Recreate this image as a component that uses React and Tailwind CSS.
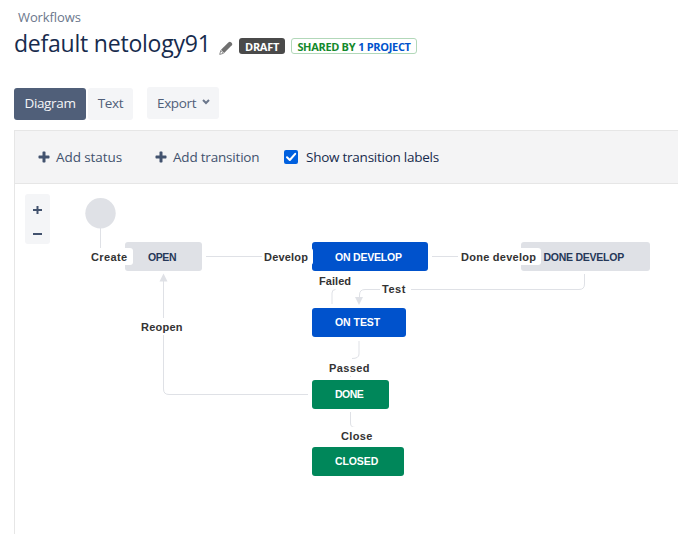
import React from "react";

const nodes = [
  { label: "OPEN", box: "left-[110px] top-[58.3px] w-[77px] pt-px bg-[#dfe1e6] text-[#253858] tracking-[-0.4px]" },
  { label: "ON DEVELOP", box: "left-[297px] top-[58.3px] w-[116px] pt-px bg-[#0052cc] text-white tracking-[-0.2px]" },
  { label: "DONE DEVELOP", box: "left-[505.5px] top-[58.3px] w-[129px] pt-px bg-[#dfe1e6] text-[#253858] tracking-[-0.25px]" },
  { label: "ON TEST", box: "left-[297px] top-[124.3px] w-[94px] bg-[#0052cc] text-white tracking-[-0.05px]" },
  { label: "DONE", box: "left-[297px] top-[196.3px] w-[77px] bg-[#00875a] text-white tracking-[-0.5px]" },
  { label: "CLOSED", box: "left-[297px] top-[263.3px] w-[92px] bg-[#00875a] text-white tracking-[-0.1px]" },
];

const labels = [
  { text: "Create", box: "left-[74px] w-[44px] top-[64px] tracking-[0.4px]" },
  { text: "Develop", box: "left-[247px] w-[51px] top-[64px] tracking-[0.2px]" },
  { text: "Done develop", box: "left-[444px] w-[82px] top-[64px] tracking-[0.25px]" },
  { text: "Failed", box: "left-[302px] w-[39px] top-[88px] tracking-[0.05px]" },
  { text: "Test", box: "left-[365px] w-[31px] top-[96px] tracking-[0.5px]" },
  { text: "Passed", box: "left-[312px] w-[48px] top-[175px] tracking-[0.4px]" },
  { text: "Close", box: "left-[324px] w-[39px] top-[243px] tracking-[0.35px]" },
  { text: "Reopen", box: "left-[124px] w-[49px] top-[134px] tracking-[0.25px]" },
];

function Plus() {
  return (
    <svg width="12" height="12" viewBox="0 0 12 12" className="shrink-0 fill-[#42526e]">
      <path d="M4.5 1.2Q4.5.5 5.2.5H6.8Q7.5.5 7.5 1.2V4.5H10.8Q11.5 4.5 11.5 5.2V6.8Q11.5 7.5 10.8 7.5H7.5V10.8Q7.5 11.5 6.8 11.5H5.2Q4.5 11.5 4.5 10.8V7.5H1.2Q.5 7.5.5 6.8V5.2Q.5 4.5 1.2 4.5H4.5Z" />
    </svg>
  );
}

function Edges() {
  return (
    <svg width="663" height="350" viewBox="15 184 663 350" className="absolute left-0 top-0" fill="none" stroke="#dfe1e6">
      <circle cx="100.5" cy="213.3" r="15.2" fill="#dfe1e6" stroke="none" />
      <path d="M100.5 228V248M206 256.5H262M432 256.5H458" />
      <path d="M163.5 280V389Q163.5 394.5 169 394.5H308" />
      <path d="M163.5 273.5L167.5 281.5H159.5Z" fill="#dfe1e6" stroke="none" />
      <path d="M584.5 274V284Q584.5 289.500 579 289.500H365Q359.5 289.500 359.5 295V298" />
      <path d="M355 297H363L359 305Z" fill="#dfe1e6" stroke="none" />
      <path d="M332 304V293Q332 289.500 335.500 289.500M359 341V354Q359 358.500 352 358.500M350.500 412V423Q350.500 427.500 355 427.500M350.500 375V377" />
    </svg>
  );
}

export default function App() {
  return (
    <div className="flex h-[534px] w-[678px] flex-col overflow-hidden bg-white pl-[14px] font-['Open_Sans','Noto_Sans',sans-serif] text-[#42526e]">
      <header className="flex h-[87px] shrink-0 flex-col whitespace-nowrap">
        <div className="mt-[7px] h-5 pl-1 text-[13px] leading-5 tracking-[-0.1px] text-[#6b778c]">Workflows</div>
        <div className="flex h-8 items-start">
          <h1 className="w-[204px] text-[23px] leading-8 tracking-[-0.22px] text-[#172b4d]">default netology91</h1>
          <svg width="14" height="14" viewBox="0 0 14 14" className="ml-px mt-[14px] shrink-0 fill-[#707070]">
            <path d="M2 8.800L9.600 1.200Q10.800.1 12 1.200L12.800 2Q13.900 3.200 12.800 4.300L5.200 11.900Z" />
            <path d="M1.800 9.500L4.500 12.300L.7 13.400Z" fill="none" stroke="#707070" strokeWidth=".8" />
          </svg>
          <span className="ml-[6px] mt-[11px] flex h-4 w-[46px] items-center justify-center rounded-[3px] bg-[#4a4a4a] pt-[2px] text-[11px] font-bold tracking-[-0.3px] text-white">DRAFT</span>
          <span className="ml-[6px] mt-[11px] flex h-4 w-[126px] items-center justify-center gap-[3px] rounded-[3px] border border-[#b2d8b9] pt-[2px] text-[11px] font-bold tracking-[-0.32px] text-[#14892c]">
            <span>SHARED BY</span>
            <span className="text-[#0052cc]">1 PROJECT</span>
          </span>
        </div>
      </header>
      <div className="flex h-[43px] shrink-0 items-start text-[13.500px] leading-5 tracking-[-0.35px]">
        <button className="mt-px flex h-8 w-[72px] items-center justify-center rounded-[3px] bg-[#505f79] pb-[2px] text-[#f4f5f7]">Diagram</button>
        <button className="ml-[2px] mt-px flex h-8 w-[45px] items-center justify-center rounded-[3px] bg-[#f4f5f7] pb-[2px] text-[#505f79]">Text</button>
        <button className="ml-[14px] flex h-8 w-[72px] items-center rounded-[3px] bg-[#f4f5f7] pl-[10px] text-[#505f79]">
          <span className="w-[45px] text-left">Export</span>
          <svg width="8" height="6" viewBox="0 0 8 6" className="-mt-0.5" fill="none" stroke="#6b778c" strokeWidth="2">
            <path d="M1 1L4 4L7 1" />
          </svg>
        </button>
      </div>
      <main className="flex min-h-0 flex-1 flex-col border-l border-t border-[#e6e6e6]">
        <div className="flex h-[53px] shrink-0 items-center whitespace-nowrap border-b border-[#e6e6e6] bg-[#f4f4f5] pl-[23px] text-[13.500px] leading-5 tracking-[-0.15px]">
          <Plus />
          <span className="ml-[6px] w-[99px] tracking-[-0.08px]">Add status</span>
          <Plus />
          <span className="ml-[6px] w-[111px] tracking-[-0.2px]">Add transition</span>
          <svg width="14" height="14" viewBox="0 0 14 14" className="shrink-0">
            <rect width="14" height="14" rx="2" fill="#0060df" />
            <path d="M3 7.200L5.800 10L11.200 3.800" fill="none" stroke="white" strokeWidth="2" strokeLinecap="round" strokeLinejoin="round" />
          </svg>
          <span className="ml-2 tracking-[-0.25px] text-[#172b4d]">Show transition labels</span>
        </div>
        <div className="relative min-h-0 flex-1 overflow-hidden">
          <Edges />
          {nodes.map((n) => (
            <div key={n.label} className={`absolute flex h-[28.4px] items-center whitespace-nowrap rounded-[3px] pl-[23px] font-['Liberation_Sans',sans-serif] text-[10.5px] font-bold leading-none ${n.box}`}>
              {n.label}
            </div>
          ))}
          {labels.map((l) => (
            <div key={l.text} className={`absolute flex h-[17px] items-center whitespace-nowrap rounded-[3px] bg-white pl-[2px] pt-px font-['Liberation_Sans',sans-serif] text-[11px] font-bold leading-none text-[#333333] ${l.box}`}>
              {l.text}
            </div>
          ))}
          <div className="absolute left-[10px] top-[10px] flex h-[50px] w-[25px] flex-col items-center justify-between rounded-[3px] bg-[#f4f5f7] pb-[9px] pt-[11px]">
            <svg width="9" height="9" viewBox="0 0 9 9" stroke="#42526e" strokeWidth="2"><path d="M0 5H9M4.500 1V9" /></svg>
            <svg width="9" height="2" viewBox="0 0 9 2" stroke="#42526e" strokeWidth="2"><path d="M0 1H9" /></svg>
          </div>
        </div>
      </main>
    </div>
  );
}
